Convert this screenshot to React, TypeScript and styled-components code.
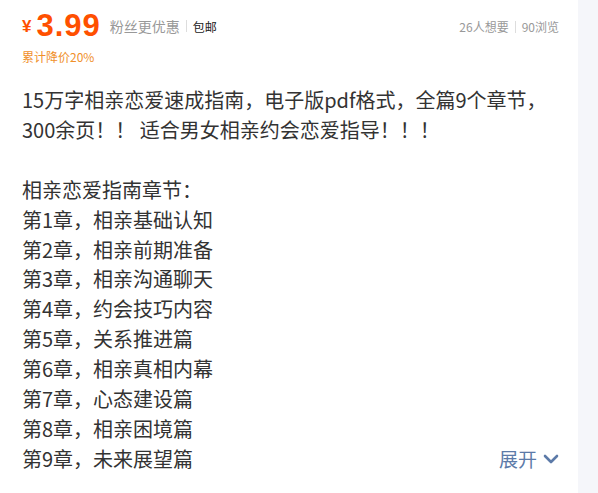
import React from 'react';
import styled, { createGlobalStyle } from 'styled-components';

const GlobalStyle = createGlobalStyle`
  html, body {
    margin: 0;
    padding: 0;
    background: #f5f6fa;
  }
  body {
    font-family: "Noto Sans CJK SC", "Liberation Sans", sans-serif;
  }
`;

const Panel = styled.div`
  width: 578px;
  height: 493px;
  background: #fff;
  box-sizing: border-box;
  padding: 8px 19px 0 22px;
  overflow: hidden;
`;

const TopRow = styled.div`
  display: flex;
  align-items: center;
  justify-content: space-between;
  height: 34px;
`;

const PriceGroup = styled.div`
  display: flex;
  align-items: center;
`;

const Yen = styled.span`
  color: #ff5000;
  font-family: "Liberation Sans", sans-serif;
  font-weight: 700;
  font-size: 17px;
  margin-right: 5px;
  margin-top: 3px;
`;

const Price = styled.span`
  color: #ff5000;
  font-family: "Liberation Sans", sans-serif;
  font-weight: 700;
  font-size: 31px;
  letter-spacing: 1px;
  line-height: 1;
  margin-right: 9px;
`;

const Label = styled.span<{ $dark?: boolean; $size?: number }>`
  color: ${(p) => (p.$dark ? '#222' : '#999')};
  font-size: ${(p) => p.$size ?? 14}px;
  margin-top: 2px;
`;

const Divider = styled.span`
  display: inline-block;
  width: 1px;
  height: 12px;
  background: #ddd;
  margin: 2px 6px 0;
`;

const Stats = styled.div`
  display: flex;
  align-items: center;
  color: #999;
  font-size: 12px;
  margin-top: 2px;
`;

const Drop = styled.div`
  color: #f0902a;
  font-size: 12px;
  line-height: 16px;
  margin-top: 7px;
`;

const Desc = styled.div`
  margin-top: 20px;
  color: #333;
  font-size: 20px;
  line-height: 29.9px;
  white-space: pre-wrap;
`;

const LastRow = styled.div`
  display: flex;
  align-items: center;
  justify-content: space-between;
  color: #333;
  font-size: 20px;
  line-height: 29.9px;
`;

const Expand = styled.button`
  display: flex;
  align-items: center;
  gap: 6px;
  border: 0;
  padding: 0;
  background: #fff;
  color: #5c7aa8;
  font-family: inherit;
  font-size: 19px;
  line-height: 29.9px;
  cursor: pointer;
`;

const descText = `15万字相亲恋爱速成指南，电子版pdf格式，全篇9个章节，300余页！！ 适合男女相亲约会恋爱指导！！！

相亲恋爱指南章节：
第1章，相亲基础认知
第2章，相亲前期准备
第3章，相亲沟通聊天
第4章，约会技巧内容
第5章，关系推进篇
第6章，相亲真相内幕
第7章，心态建设篇
第8章，相亲困境篇`;

export default function App() {
  return (
    <>
      <GlobalStyle />
      <Panel>
        <TopRow>
          <PriceGroup>
            <Yen>¥</Yen>
            <Price>3.99</Price>
            <Label>粉丝更优惠</Label>
            <Divider />
            <Label $dark $size={12}>包邮</Label>
          </PriceGroup>
          <Stats>
            26人想要
            <Divider />
            90浏览
          </Stats>
        </TopRow>
        <Drop>累计降价20%</Drop>
        <Desc>{descText}</Desc>
        <LastRow>
          <span>第9章，未来展望篇</span>
          <Expand>
            展开
            <svg width="16" height="10" viewBox="0 0 16 10">
              <path d="M2 2 L8 8 L14 2" fill="none" stroke="#5c7aa8" strokeWidth="2.6" strokeLinecap="round" strokeLinejoin="round" />
            </svg>
          </Expand>
        </LastRow>
      </Panel>
    </>
  );
}
